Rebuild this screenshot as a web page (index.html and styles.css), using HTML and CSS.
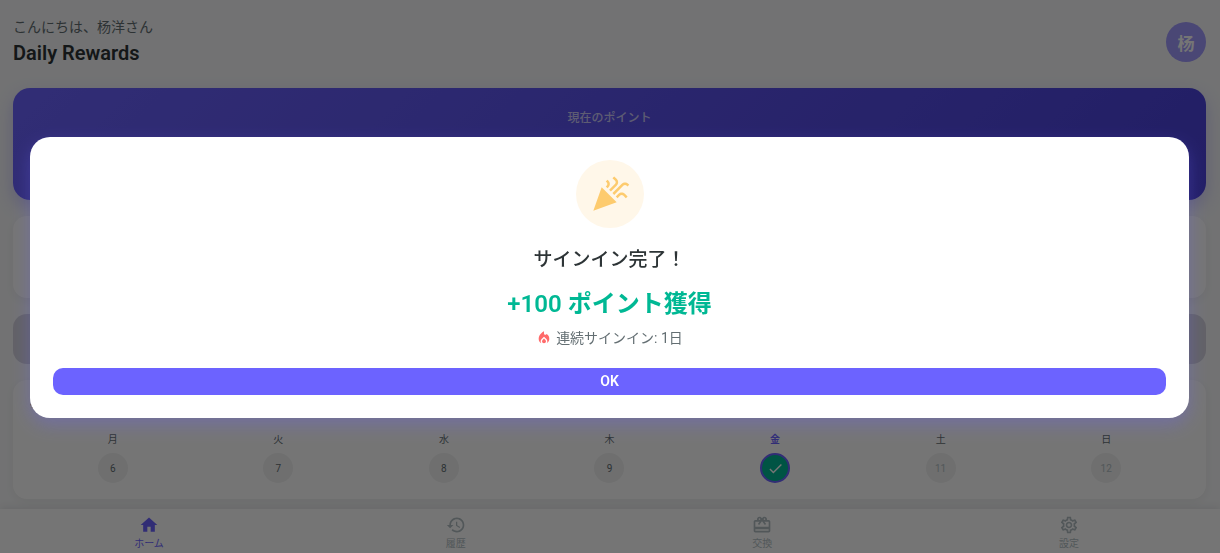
FILE: index.html
```
<!DOCTYPE html>
<html lang="ja">
<head>
<meta charset="utf-8">
<meta name="viewport" content="width=device-width, initial-scale=1">
<title>Daily Rewards</title>
<link rel="stylesheet" href="styles.css">
</head>
<body>
<div class="app">
  <header class="header">
    <div>
      <p class="greeting">こんにちは、杨洋さん</p>
      <h1 class="title">Daily Rewards</h1>
    </div>
    <div class="avatar">杨</div>
  </header>
  <main class="content">
    <section class="points"><p class="points-label">現在のポイント</p></section>
    <section class="card stats"></section>
    <button class="claim" type="button" disabled aria-label="サインイン"></button>
    <section class="card week">
      <h2 class="week-title">今週</h2>
      <ol class="days">
        <li class="day"><span class="day-name">月</span><span class="day-dot">6</span></li>
        <li class="day"><span class="day-name">火</span><span class="day-dot">7</span></li>
        <li class="day"><span class="day-name">水</span><span class="day-dot">8</span></li>
        <li class="day"><span class="day-name">木</span><span class="day-dot">9</span></li>
        <li class="day today"><span class="day-name">金</span><span class="day-dot"><svg class="check" viewBox="0 0 24 24"><path d="M9 16.17L4.83 12l-1.42 1.41L9 19 21 7l-1.41-1.41z"/></svg></span></li>
        <li class="day future"><span class="day-name">土</span><span class="day-dot">11</span></li>
        <li class="day future"><span class="day-name">日</span><span class="day-dot">12</span></li>
      </ol>
    </section>
  </main>
  <nav class="nav">
    <a class="nav-item active" href="#home"><svg class="nav-icon" viewBox="0 0 24 24"><path d="M10 20v-6h4v6h5v-8h3L12 3 2 12h3v8z"/></svg>ホーム</a>
    <a class="nav-item" href="#history"><svg class="nav-icon" viewBox="0 0 24 24"><path d="M13 3c-4.97 0-9 4.03-9 9H1l3.89 3.89.07.14L9 12H6c0-3.87 3.13-7 7-7s7 3.13 7 7-3.13 7-7 7c-1.93 0-3.68-.79-4.94-2.06l-1.42 1.42C8.27 19.99 10.51 21 13 21c4.97 0 9-4.03 9-9s-4.03-9-9-9zm-1 5v5l4.28 2.54.72-1.21-3.5-2.08V8H12z"/></svg>履歴</a>
    <a class="nav-item" href="#exchange"><svg class="nav-icon" viewBox="0 0 24 24"><path d="M20 6h-2.18c.11-.31.18-.65.18-1 0-1.66-1.34-3-3-3-1.05 0-1.96.54-2.5 1.35l-.5.67-.5-.68C10.96 2.54 10.05 2 9 2 7.34 2 6 3.34 6 5c0 .35.07.69.18 1H4c-1.11 0-1.99.89-1.99 2L2 19c0 1.11.89 2 2 2h16c1.11 0 2-.89 2-2V8c0-1.11-.89-2-2-2zm-5-2c.55 0 1 .45 1 1s-.45 1-1 1-1-.45-1-1 .45-1 1-1zM9 4c.55 0 1 .45 1 1s-.45 1-1 1-1-.45-1-1 .45-1 1-1zm11 15H4v-2h16v2zm0-5H4V8h5.08L7 10.83 8.62 12 11 8.76l1-1.36 1 1.36L15.38 12 17 10.83 14.92 8H20v6z"/></svg>交換</a>
    <a class="nav-item" href="#settings"><svg class="nav-icon" viewBox="0 0 24 24"><path d="M19.43 12.98c.04-.32.07-.64.07-.98 0-.34-.03-.66-.07-.98l2.11-1.65c.19-.15.24-.42.12-.64l-2-3.46c-.09-.16-.26-.25-.44-.25-.06 0-.12.01-.17.03l-2.49 1c-.52-.4-1.08-.73-1.69-.98l-.38-2.65C14.46 2.18 14.25 2 14 2h-4c-.25 0-.46.18-.49.42l-.38 2.65c-.61.25-1.17.59-1.69.98l-2.49-1c-.06-.02-.12-.03-.18-.03-.17 0-.34.09-.43.25l-2 3.46c-.13.22-.07.49.12.64l2.11 1.65c-.04.32-.07.65-.07.98 0 .33.03.66.07.98l-2.11 1.65c-.19.15-.24.42-.12.64l2 3.46c.09.16.26.25.44.25.06 0 .12-.01.17-.03l2.49-1c.52.4 1.08.73 1.69.98l.38 2.65c.03.24.24.42.49.42h4c.25 0 .46-.18.49-.42l.38-2.65c.61-.25 1.17-.59 1.69-.98l2.49 1c.06.02.12.03.18.03.17 0 .34-.09.43-.25l2-3.46c.12-.22.07-.49-.12-.64l-2.11-1.65zm-1.98-1.71c.04.31.05.52.05.73 0 .21-.02.43-.05.73l-.14 1.13.89.7 1.08.84-.7 1.21-1.27-.51-1.04-.42-.9.68c-.43.32-.84.56-1.25.73l-1.06.43-.16 1.13-.2 1.35h-1.4l-.19-1.35-.16-1.13-1.06-.43c-.43-.18-.83-.41-1.23-.71l-.91-.7-1.06.43-1.27.51-.7-1.21 1.08-.84.89-.7-.14-1.13c-.03-.31-.05-.54-.05-.74s.02-.43.05-.73l.14-1.13-.89-.7-1.08-.84.7-1.21 1.27.51 1.04.42.9-.68c.43-.32.84-.56 1.25-.73l1.06-.43.16-1.13.2-1.35h1.39l.19 1.35.16 1.13 1.06.43c.43.18.83.41 1.23.71l.91.7 1.06-.43 1.27-.51.7 1.21-1.07.85-.89.7.14 1.13zM12 8c-2.21 0-4 1.79-4 4s1.79 4 4 4 4-1.79 4-4-1.79-4-4-4zm0 6c-1.1 0-2-.9-2-2s.9-2 2-2 2 .9 2 2-.9 2-2 2z"/></svg>設定</a>
  </nav>
</div>
<div class="overlay">
  <div class="modal" role="dialog" aria-modal="true" aria-labelledby="modal-title">
    <div class="modal-icon"><svg class="party" viewBox="0 0 24 24"><path d="M2 22l14-5-9-9zM14.53 12.53l5.59-5.59c.49-.49 1.28-.49 1.77 0l.59.59 1.06-1.06-.59-.59c-1.07-1.07-2.82-1.07-3.89 0l-5.59 5.59zM10.06 6.88l-.59.59 1.06 1.06.59-.59c1.07-1.07 1.07-2.82 0-3.89l-.59-.59-1.06 1.07.59.59c.48.48.48 1.28 0 1.76zM17.06 11.88l-1.59 1.59 1.06 1.06 1.59-1.59c.49-.49 1.28-.49 1.77 0l1.61 1.61 1.06-1.06-1.61-1.61c-1.08-1.07-2.82-1.07-3.89 0zM15.06 5.88l-3.59 3.59 1.06 1.06 3.59-3.59c1.07-1.07 1.07-2.82 0-3.89l-1.59-1.59-1.06 1.06 1.59 1.59c.48.49.48 1.29 0 1.77z"/></svg></div>
    <h2 class="modal-title" id="modal-title">サインイン完了！</h2>
    <p class="reward">+100 ポイント獲得</p>
    <p class="streak"><svg class="fire" viewBox="0 0 24 24"><path d="M12 12.9l-2.13 2.09C9.31 15.55 9 16.28 9 17.06 9 18.68 10.35 20 12 20s3-1.32 3-2.94c0-.78-.31-1.52-.87-2.07zM16 6l-.44.55C14.38 8.02 12 7.19 12 5.3V2S4 6 4 13c0 2.92 1.56 5.47 3.89 6.86-.56-.79-.89-1.76-.89-2.8 0-1.32.52-2.56 1.47-3.5L12 10.1l3.53 3.47c.95.93 1.47 2.17 1.47 3.5 0 1.02-.31 1.96-.85 2.75 1.89-1.15 3.29-3.06 3.71-5.3.66-3.55-1.07-6.9-3.86-8.52z"/></svg>連続サインイン: 1日</p>
    <button class="ok" type="button">OK</button>
  </div>
</div>
</body>
</html>
```
FILE: styles.css
```
* { box-sizing: border-box; }

body, h1, h2, p, ol { margin: 0; padding: 0; }

body {
  background: #f8f9fa;
  color: #2d3436;
  font-family: Roboto, "Noto Sans CJK JP", sans-serif;
}

svg { display: block; fill: currentColor; }

.app {
  display: flex;
  flex-direction: column;
  min-height: 100vh;
}

.header {
  display: flex;
  align-items: center;
  justify-content: space-between;
  padding: 16px 14px 0 13px;
}

.greeting { color: #636e72; font-size: 14px; line-height: 22px; }

.title { font-size: 20px; font-weight: 600; line-height: 30px; }

.avatar {
  display: grid;
  place-items: center;
  width: 40px;
  height: 40px;
  border-radius: 50%;
  background: #a29bfe;
  color: #fff;
  font-size: 17px;
  font-weight: 700;
}

.content {
  display: flex;
  flex: 1;
  flex-direction: column;
  gap: 16px;
  padding: 20px 14px 10px 13px;
}

.points {
  min-height: 112px;
  padding: 20px;
  border-radius: 17px;
  background: linear-gradient(135deg, #6c63ff, #4b42dc);
  box-shadow: 0 7px 17px rgba(108, 99, 255, .3);
  text-align: center;
}

.points-label {
  color: rgba(255, 255, 255, .7);
  font-size: 12px;
  font-weight: 500;
  line-height: 20px;
}

.card {
  border-radius: 14px;
  background: #fff;
  box-shadow: 0 3px 9px rgba(45, 52, 54, .06);
}

.stats { min-height: 82px; }

.claim {
  min-height: 50px;
  border: 0;
  border-radius: 14px;
  background: #d5d4de;
}

.week { padding: 16px 17px; }

.week-title { font-size: 14px; font-weight: 500; line-height: 20px; }

.days {
  display: grid;
  grid-template-columns: repeat(7, 1fr);
  padding-top: 16px;
  list-style: none;
}

.day {
  display: flex;
  flex-direction: column;
  align-items: center;
  gap: 6px;
}

.day-name { color: #636e72; font-size: 10px; line-height: 15px; }

.day-dot {
  display: grid;
  place-items: center;
  width: 30px;
  height: 30px;
  border-radius: 50%;
  background: #f1f2f2;
  color: #636e72;
  font-size: 10px;
}

.future .day-dot { color: #b2bec3; }

.today .day-name { color: #6c63ff; font-weight: 700; }

.today .day-dot {
  border: 2px solid #6c63ff;
  background: #00b894;
  color: #fff;
}

.check { width: 17px; height: 17px; }

.nav {
  display: flex;
  justify-content: space-between;
  padding: 6px 135px 2px 133px;
  background: #fff;
  box-shadow: 0 -2px 8px rgba(45, 52, 54, .1);
}

.nav-item {
  display: flex;
  flex-direction: column;
  align-items: center;
  gap: 1px;
  width: 32px;
  color: #b2bec3;
  font-size: 10px;
  line-height: 15px;
  text-decoration: none;
  white-space: nowrap;
}

.nav-item.active { color: #6c63ff; }

.nav-icon { width: 20px; height: 20px; }

.overlay {
  position: fixed;
  inset: 0;
  display: flex;
  align-items: center;
  justify-content: center;
  padding: 2px 31px 0 30px;
  background: rgba(0, 0, 0, .54);
}

.modal {
  display: flex;
  flex: 1;
  flex-direction: column;
  align-items: center;
  padding: 23px;
  border-radius: 20px;
  background: #fff;
  box-shadow: 0 7px 17px rgba(108, 99, 255, .3);
}

.modal-icon {
  display: grid;
  place-items: center;
  width: 68px;
  height: 68px;
  border-radius: 50%;
  background: #fff7e9;
  color: #fdcb6e;
}

.party { width: 40px; height: 40px; }

.modal-title {
  margin-top: 18px;
  font-size: 19px;
  font-weight: 500;
  line-height: 28px;
}

.reward {
  margin-top: 14px;
  color: #00b894;
  font-size: 24px;
  font-weight: 600;
  line-height: 32px;
}

.streak {
  display: flex;
  align-items: center;
  gap: 4px;
  margin-top: 7px;
  color: #636e72;
  font-size: 14px;
  line-height: 22px;
}

.fire { width: 16px; height: 16px; color: #ff6b6b; }

.ok {
  align-self: stretch;
  margin-top: 19px;
  padding: 3px;
  border: 0;
  border-radius: 10px;
  background: #6c63ff;
  color: #fff;
  font-family: inherit;
  font-size: 14px;
  font-weight: 600;
  line-height: 21px;
}
```
